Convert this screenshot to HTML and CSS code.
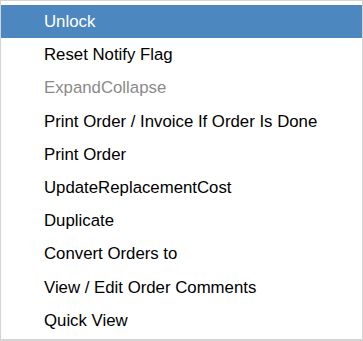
FILE: index.html
```html
<!DOCTYPE html>
<html lang="en">
<head>
    <meta charset="UTF-8">
    <meta name="viewport" content="width=device-width, initial-scale=1.0">
    <title>Order Menu</title>
    <link rel="stylesheet" href="styles.css">
</head>
<body>
    <ul class="context-menu">
        <li class="menu-item active">Unlock</li>
        <li class="menu-item">Reset Notify Flag</li>
        <li class="menu-item disabled">ExpandCollapse</li>
        <li class="menu-item">Print Order / Invoice If Order Is Done</li>
        <li class="menu-item">Print Order</li>
        <li class="menu-item">UpdateReplacementCost</li>
        <li class="menu-item">Duplicate</li>
        <li class="menu-item">Convert Orders to</li>
        <li class="menu-item">View / Edit Order Comments</li>
        <li class="menu-item">Quick View</li>
    </ul>
</body>
</html>
```

FILE: styles.css
```css
* {
    margin: 0;
    padding: 0;
    box-sizing: border-box;
}

body {
    background-color: #ffffff;
    font-family: 'Liberation Sans', Arial, sans-serif;
}

.context-menu {
    list-style: none;
    width: 363px;
    height: 341px;
    border: 1px solid #d4d4d4;
    border-bottom-width: 2px;
    padding-top: 4px;
}

.menu-item {
    height: 33.2px;
    line-height: 33px;
    padding-left: 43px;
    font-size: 16.8px;
    color: #000;
    white-space: nowrap;
}

.menu-item.active {
    background-color: #4d87c0;
    color: #fff;
}

.menu-item.disabled {
    color: #8a8a8a;
}
```
